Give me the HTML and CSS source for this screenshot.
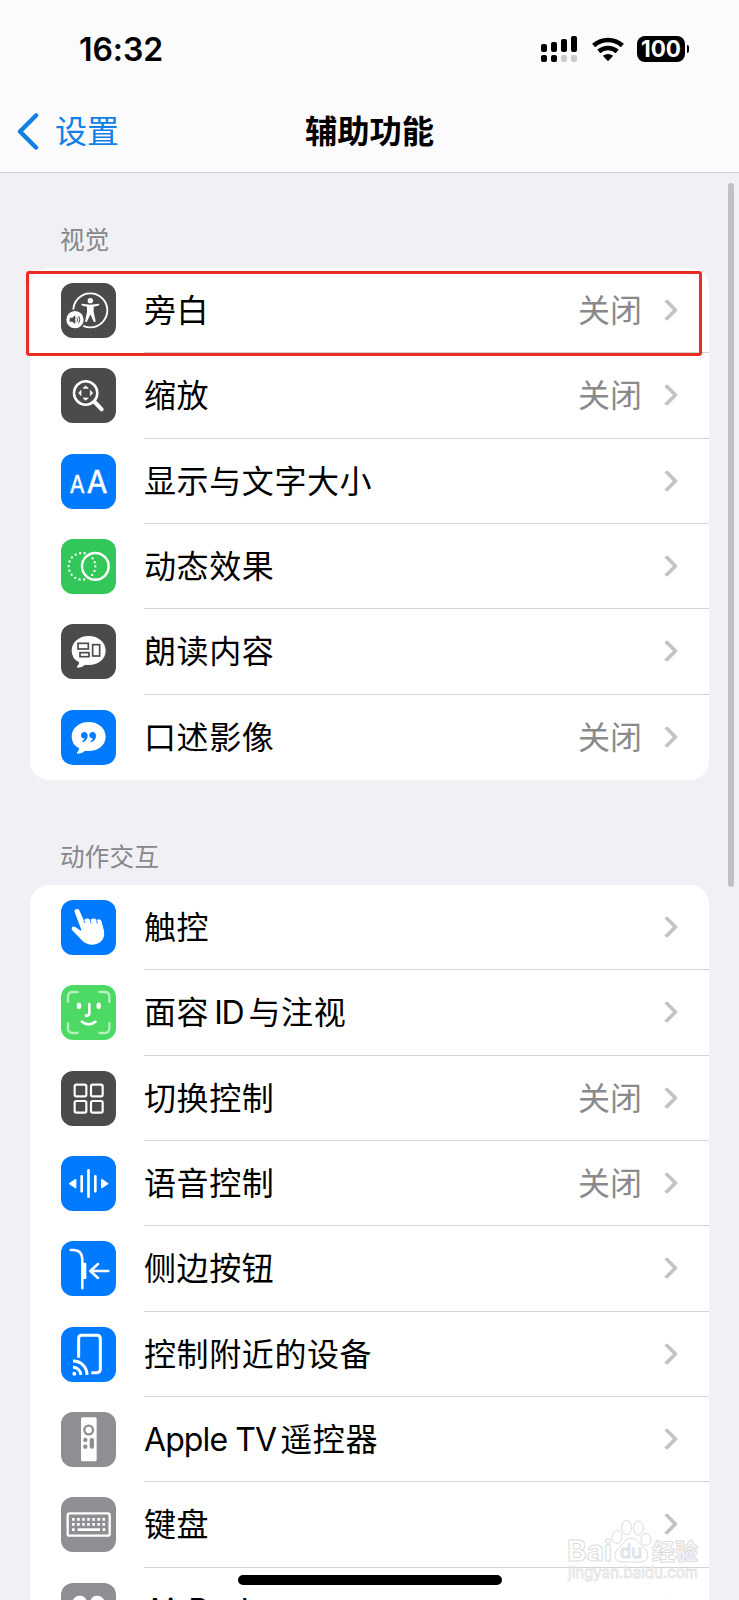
FILE: index.html
```html
<!DOCTYPE html>
<html lang="zh-CN">
<head>
  <meta charset="UTF-8" />
  <meta name="viewport" content="width=device-width, initial-scale=1.0" />
  <title>辅助功能</title>
  <link rel="stylesheet" href="styles.css">
</head>
<body>
  <header>
    <div class="status-bar">
      <div class="time">16:32</div>
      <div class="status-icons">
        <svg class="signal" width="37" height="26" viewBox="0 0 37 26">
          <rect x="0" y="8" width="6" height="8" rx="2" />
          <rect x="10" y="6" width="6" height="10" rx="2" />
          <rect x="20" y="3" width="6" height="13" rx="2" />
          <rect x="30" y="0" width="6" height="16" rx="2" />
          <rect x="0" y="19" width="6" height="7" rx="2" />
          <rect x="10" y="19" width="6" height="7" rx="2" />
          <rect x="20" y="19" width="6" height="7" rx="2" fill="#cbcbcd" />
          <rect x="30" y="19" width="6" height="7" rx="2" fill="#cbcbcd" />
        </svg>
        <svg class="wifi" width="32" height="25" viewBox="0 0 32 25">
          <g fill="none" stroke="#000" stroke-width="4.6">
            <path d="M1.6 8.6Q8 3 16 3T30.400 8.600" />
            <path d="M6.800 14.400Q11 11 16 11T25.200 14.400" />
          </g>
          <path d="M10.800 18.800Q16 15.400 21.200 18.800L16 24.200z" />
        </svg>
        <div class="battery">100</div>
      </div>
    </div>
    <nav>
      <a class="back" href="#">
        <svg width="22" height="37" viewBox="0 0 22 37"><path d="M19 2.500L3 18.500L19 34.500" /></svg>
        <span>设置</span>
      </a>
      <h1>辅助功能</h1>
    </nav>
  </header>

  <main>
    <h2>视觉</h2>
    <ul class="card">
      <li class="row">
        <svg class="icon dark" viewBox="0 0 165 165">
          <circle cx="88" cy="82" r="51" fill="none" stroke="#fff" stroke-width="5.500" />
          <circle cx="88" cy="53" r="8" />
          <path d="M61 62Q60 67 65 68L78 71V87L72 114Q73 119 78 116L88 94L98 116Q103 119 104 114L98 87V71L111 68Q116 67 115 62L88 65z" />
          <circle class="hole" cx="42" cy="110" r="31" />
          <circle cx="42" cy="110" r="26" />
          <path class="hole" d="M26 104H34L43 97V123L34 116H26z" />
          <path class="cut" stroke-width="3" d="M48 104Q52 110 48 116M53 99Q60 110 53 121" />
        </svg>
        <div class="content"><span class="label">旁白</span><span class="value">关闭</span><i class="chevron"></i></div>
      </li>
      <li class="row">
        <svg class="icon dark" viewBox="0 0 165 165">
          <circle cx="74" cy="75" r="35" fill="none" stroke="#fff" stroke-width="7.500" />
          <path d="M101 102L122 124" fill="none" stroke="#fff" stroke-width="12" stroke-linecap="round" />
          <path stroke="#fff" stroke-width="2" stroke-linejoin="round" d="M74 54L82 61H66zM74 97L82 90H66zM53 75L60 67V83zM95 75L88 67V83z" />
        </svg>
        <div class="content"><span class="label">缩放</span><span class="value">关闭</span><i class="chevron"></i></div>
      </li>
      <li class="row">
        <svg class="icon blue" viewBox="0 0 165 165">
          <g stroke="#fff" stroke-width="1.500">
            <text x="26" y="117" font-size="74" textLength="45" lengthAdjust="spacingAndGlyphs">A</text>
            <text x="77" y="117" font-size="94" textLength="62" lengthAdjust="spacingAndGlyphs">A</text>
          </g>
        </svg>
        <div class="content"><span class="label">显示与文字大小</span><i class="chevron"></i></div>
      </li>
      <li class="row">
        <svg class="icon green" viewBox="0 0 165 165">
          <circle cx="63" cy="82" r="40" fill="none" stroke="#fff" stroke-width="7" stroke-linecap="round" stroke-dasharray="0 13.96" />
          <circle cx="103" cy="82" r="40" fill="none" stroke="#fff" stroke-width="7.500" />
        </svg>
        <div class="content"><span class="label">动态效果</span><i class="chevron"></i></div>
      </li>
      <li class="row">
        <svg class="icon dark" viewBox="0 0 165 165">
          <path d="M83 36C112 36 134 55 134 80C134 105 112 123 83 123Q78 123 73 122Q64 130 50 131Q46 130 49 126Q55 121 54 115Q32 103 32 80C32 55 54 36 83 36z" />
          <g class="cut" stroke-width="5">
            <rect x="51" y="58" width="31" height="17" />
            <rect x="95" y="62" width="21" height="34" />
            <rect x="57" y="86" width="27" height="12" />
          </g>
        </svg>
        <div class="content"><span class="label">朗读内容</span><i class="chevron"></i></div>
      </li>
      <li class="row">
        <svg class="icon blue" viewBox="0 0 165 165">
          <path d="M83 36C112 36 134 55 134 80C134 105 112 123 83 123Q78 123 73 122Q64 130 50 131Q46 130 49 126Q55 121 54 115Q32 103 32 80C32 55 54 36 83 36z" />
          <path class="hole" d="M70 66C76 66 80 71 80 77C80 87 73 94 65 96Q61 95 65 92Q70 89 71 85C64 86 60 82 60 76C60 70 64 66 70 66zM95 66C101 66 105 71 105 77C105 87 98 94 90 96Q86 95 90 92Q95 89 96 85C89 86 85 82 85 76C85 70 89 66 95 66z" />
        </svg>
        <div class="content"><span class="label">口述影像</span><span class="value">关闭</span><i class="chevron"></i></div>
      </li>
    </ul>

    <h2>动作交互</h2>
    <ul class="card">
      <li class="row">
        <svg class="icon blue" viewBox="0 0 165 165">
          <path d="M41 36C38 27 51 23 55 31L69 62C72 54 83 54 88 61C92 53 104 55 107 61C112 54 121 58 122 66L129 92C134 119 114 134 93 134C74 134 65 124 57 115L33 90C29 82 36 76 43 81L57 91C61 94 62 91 60 87z" />
          <path class="cut" stroke-width="2.500" d="M88 60L90 70M107 60L109 71M69 61L71 69" />
        </svg>
        <div class="content"><span class="label">触控</span><i class="chevron"></i></div>
      </li>
      <li class="row">
        <svg class="icon lime" viewBox="0 0 165 165">
          <g fill="none" stroke="#fff" stroke-linecap="round">
            <path stroke="#b3f0ba" stroke-width="7" d="M21 51V35Q21 21 35 21H50M115 21H131Q145 21 145 35V51M145 115V130Q145 144 131 144H115M50 144H35Q21 144 21 130V115" />
            <path stroke-width="8" d="M85 57V85Q85 92 75 92M63 110Q83 126 103 110" />
            <path stroke-width="13" d="M54 59V66M113 59V66" />
          </g>
        </svg>
        <div class="content"><span class="label">面容<span class="id">ID</span>与注视</span><i class="chevron"></i></div>
      </li>
      <li class="row">
        <svg class="icon dark" viewBox="0 0 165 165">
          <g fill="none" stroke="#fff" stroke-width="6.500">
            <rect x="41" y="41" width="35" height="35" rx="5" />
            <rect x="90" y="41" width="35" height="35" rx="5" />
            <rect x="41" y="90" width="35" height="35" rx="5" />
            <rect x="90" y="90" width="35" height="35" rx="5" />
          </g>
        </svg>
        <div class="content"><span class="label">切换控制</span><span class="value">关闭</span><i class="chevron"></i></div>
      </li>
      <li class="row">
        <svg class="icon blue" viewBox="0 0 165 165">
          <path fill="none" stroke="#fff" stroke-width="8" stroke-linecap="round" d="M62 61V106M82.500 43V122M103 61V106" />
          <path stroke="#fff" stroke-width="4" stroke-linejoin="round" d="M26 83L44 71V95zM140 83L122 71V95z" />
        </svg>
        <div class="content"><span class="label">语音控制</span><span class="value">关闭</span><i class="chevron"></i></div>
      </li>
      <li class="row">
        <svg class="icon blue" viewBox="0 0 165 165">
          <g fill="none" stroke="#fff" stroke-width="7.500" stroke-linecap="round" stroke-linejoin="round">
            <path d="M29 27H36Q64 27 64 57V142" />
            <path d="M142 90H88M111 69L88 90L111 111" />
          </g>
          <rect x="65" y="65" width="11" height="49" rx="3" />
        </svg>
        <div class="content"><span class="label">侧边按钮</span><i class="chevron"></i></div>
      </li>
      <li class="row">
        <svg class="icon blue" viewBox="0 0 165 165">
          <g fill="none" stroke="#fff" stroke-width="9">
            <path d="M53 92V34Q53 25 62 25H108Q118 25 118 35V127Q118 137 108 137H91" />
            <path d="M36 121A22 22 0 0 1 59 144M36 102A41 41 0 0 1 78 144" />
          </g>
          <circle cx="40" cy="140" r="6" />
        </svg>
        <div class="content"><span class="label">控制附近的设备</span><i class="chevron"></i></div>
      </li>
      <li class="row">
        <svg class="icon gray" viewBox="0 0 165 165">
          <rect x="60" y="16" width="47" height="132" rx="5" />
          <circle class="cut" cx="83" cy="54" r="13" stroke-width="7" />
          <circle class="hole" cx="73" cy="84" r="6.500" />
          <circle class="hole" cx="73" cy="104" r="6.500" />
          <rect class="hole" x="86" y="78" width="13" height="32" rx="6" />
        </svg>
        <div class="content"><span class="label"><span class="tv">Apple TV</span>遥控器</span><i class="chevron"></i></div>
      </li>
      <li class="row">
        <svg class="icon gray" viewBox="0 0 165 165">
          <rect x="20" y="49" width="126" height="67" rx="6" fill="none" stroke="#fff" stroke-width="7" />
          <g fill="none" stroke="#fff" stroke-width="8">
            <path stroke-dasharray="8 7.200" d="M33 67H133M33 82H133" />
            <path d="M33 98H41M50 98H117M125 98H133" />
          </g>
        </svg>
        <div class="content"><span class="label">键盘</span><i class="chevron"></i></div>
      </li>
      <li class="row">
        <svg class="icon gray" viewBox="0 0 165 165">
          <path d="M34 60C34 46 45 38 57 38Q72 38 77 53V130H62V80H50Q34 75 34 60zM131 60C131 46 120 38 108 38Q93 38 88 53V130H103V80H115Q131 75 131 60z" />
          <path class="cut" stroke-width="4" d="M48 53L57 60M117 53L108 60" />
        </svg>
        <div class="content"><span class="label">AirPods</span><i class="chevron"></i></div>
      </li>
    </ul>
  </main>

  <div class="highlight"></div>
  <div class="scrollbar"></div>
  <div class="home-indicator"></div>

  <svg class="watermark" width="140" height="70" viewBox="0 0 140 70">
    <text x="2" y="42.500" font-size="29" font-weight="700" textLength="45" lengthAdjust="spacingAndGlyphs">Bai</text>
    <ellipse cx="52" cy="19" rx="5" ry="6.500" />
    <ellipse cx="61.500" cy="9.500" rx="5" ry="7" />
    <ellipse cx="73.500" cy="10" rx="5" ry="7" />
    <ellipse cx="81" cy="21.500" rx="5" ry="6" />
    <path d="M66 20C73 20 75 27 80 31C85 36 83 44 76 44H57C50 44 47 36 53 31C58 27 60 20 66 20z" />
    <text x="55" y="40" font-size="18" textLength="22" lengthAdjust="spacingAndGlyphs">du</text>
    <text x="87" y="42" font-size="23" font-weight="700">经验</text>
    <text class="url" x="3" y="59.500" font-size="15.500" textLength="130" lengthAdjust="spacingAndGlyphs">jingyan.baidu.com</text>
  </svg>
</body>
</html>
```
FILE: styles.css
```css
* {
  box-sizing: border-box;
}

body {
  position: relative;
  height: 1600px;
  margin: 0;
  overflow: hidden;
  background: #f1f0f5;
  color: #000;
  font-family: Inter, "Noto Sans CJK SC", sans-serif;
}

header {
  height: 173px;
  background: #fbfbfd;
  border-bottom: 1px solid #cdcdd2;
}

.status-bar {
  display: flex;
  justify-content: space-between;
  align-items: center;
  height: 98px;
  padding: 0 50px 0 79px;
}

.time {
  font-size: 32px;
  font-weight: 600;
  letter-spacing: -0.1px;
}

.status-icons {
  display: flex;
  align-items: center;
}

.wifi {
  margin: 0 13px 0 14px;
}

.battery {
  position: relative;
  width: 48px;
  height: 26px;
  margin-right: 4px;
  border-radius: 8px;
  background: #000;
  color: #fff;
  font-size: 22.5px;
  font-weight: 700;
  line-height: 26px;
  text-align: center;
}

.battery::after {
  content: "";
  position: absolute;
  top: 9px;
  right: -4px;
  width: 2px;
  height: 8px;
  border-radius: 0 2px 2px 0;
  background: #000;
}

nav {
  display: grid;
  grid-template-columns: 1fr auto 1fr;
  align-items: center;
  height: 66px;
  padding-left: 17px;
}

.back {
  display: flex;
  align-items: center;
  gap: 16px;
  color: #117fe6;
  font-size: 32px;
  line-height: 44px;
  text-decoration: none;
}

.back span {
  padding-top: 2px;
}

.back path {
  fill: none;
  stroke: #117fe6;
  stroke-width: 4.5;
  stroke-linecap: round;
  stroke-linejoin: round;
}

h1 {
  margin: 0 17px 0 0;
  padding-top: 1px;
  font-size: 32.3px;
  font-weight: 700;
  line-height: 44px;
}

h2 {
  height: 105px;
  margin: 0;
  padding: 59px 0 0 60px;
  color: #86868b;
  font-size: 24.5px;
  font-weight: 400;
  letter-spacing: 0.3px;
  line-height: 36px;
}

main h2:first-child {
  height: 95px;
  padding-top: 49px;
}

.card {
  width: 679px;
  margin: 0 0 0 30px;
  padding: 0;
  border-radius: 19px;
  background: #fff;
  list-style: none;
}

.row {
  display: flex;
  align-items: center;
  gap: 28.5px;
  height: 85.33px;
  padding-left: 30.5px;
}

.icon {
  width: 55px;
  height: 55px;
  border-radius: 12px;
  background: var(--tint);
  fill: #fff;
}

.dark { --tint: #4b4b4c; }
.blue { --tint: #007aff; }
.green { --tint: #33c759; }
.lime { --tint: #4cd964; }
.gray { --tint: #8e8e93; }

.hole {
  fill: var(--tint);
}

.cut {
  fill: none;
  stroke: var(--tint);
}

.content {
  display: flex;
  flex: 1;
  align-items: center;
  height: 100%;
  padding-right: 31px;
  border-bottom: 1px solid #d2d2d5;
}

.row:last-child .content {
  border-bottom: 0;
}

.label {
  flex: 1;
  padding-top: 2px;
  font-size: 32px;
  letter-spacing: 0.6px;
  line-height: 44px;
}

.id {
  margin: 0 5px;
  letter-spacing: -1.2px;
}

.tv {
  margin-right: 4px;
  letter-spacing: -0.9px;
}

.value {
  margin-right: 23px;
  padding-top: 2px;
  color: #8a8a8c;
  font-size: 32px;
  line-height: 44px;
}

.chevron {
  width: 16px;
  height: 16px;
  margin-right: 3px;
  margin-left: -6px;
  border: solid #c3c3c6;
  border-width: 4px 4px 0 0;
  border-radius: 2px;
  transform: rotate(45deg);
}

.highlight {
  position: absolute;
  top: 271px;
  left: 26px;
  width: 675.5px;
  height: 84.5px;
  border: 3px solid #ec2c23;
  border-radius: 3px;
}

.scrollbar {
  position: absolute;
  top: 183px;
  right: 5px;
  width: 6px;
  height: 704px;
  border-radius: 3px;
  background: #bfbfc4;
}

.home-indicator {
  position: absolute;
  top: 1575px;
  left: 238px;
  width: 264px;
  height: 10px;
  border-radius: 5px;
  background: #000;
}

.watermark {
  position: absolute;
  top: 1518px;
  left: 565px;
  fill: #fff;
  stroke: #dcdcde;
  stroke-width: 1;
}

.url {
  stroke: #e2e2e4;
  stroke-width: 0.8;
}
```
